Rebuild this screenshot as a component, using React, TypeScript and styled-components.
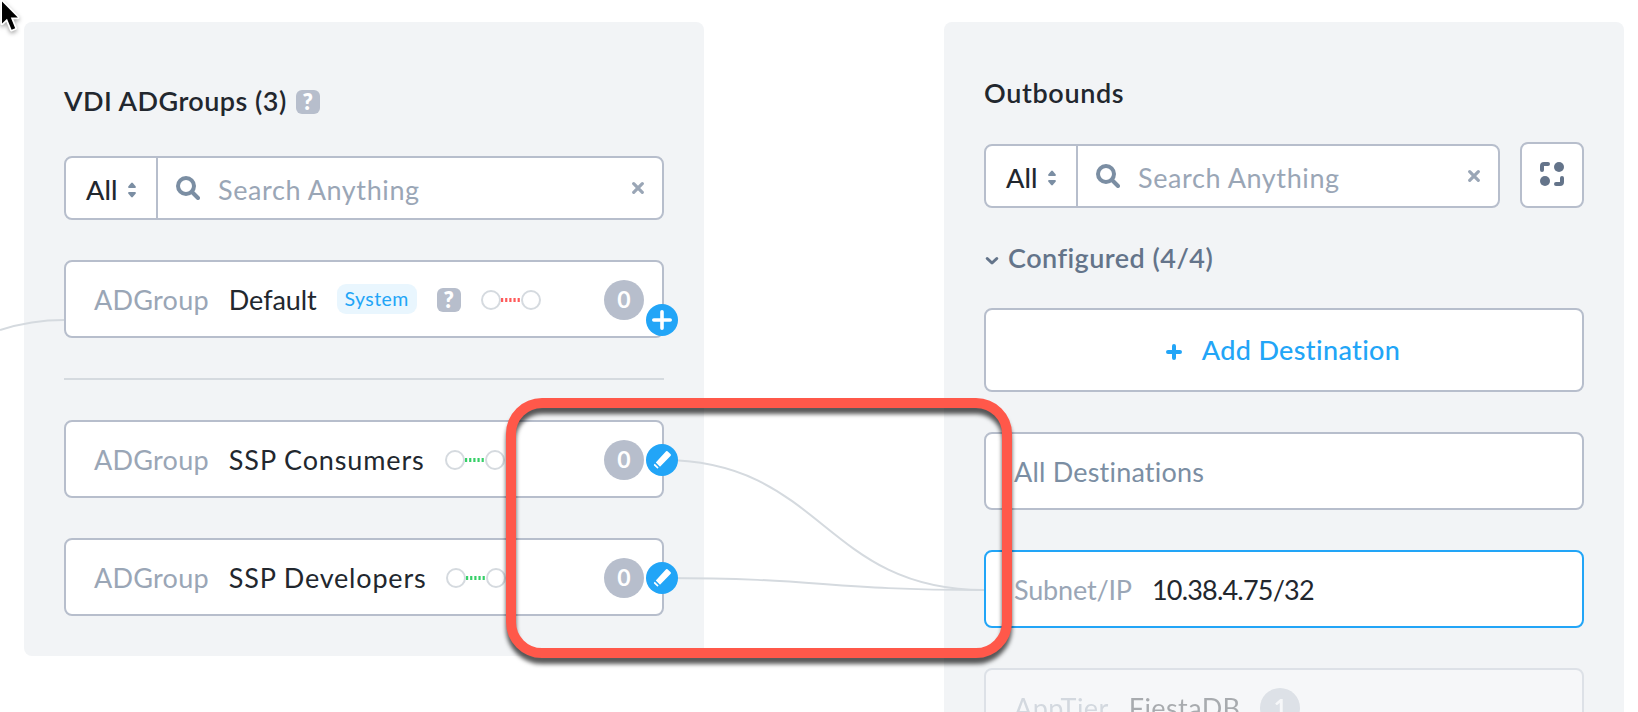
import React from 'react';
import styled, { createGlobalStyle, css } from 'styled-components';

const color = {
  panel: '#f2f4f6',
  border: '#b7becc',
  text: '#22272e',
  muted: '#9aa6b6',
  icon: '#7b8ea3',
  slate: '#64748a',
  blue: '#22a5f7',
  blueSoft: '#e9f6fe',
  wire: '#d5dadf',
  danger: '#ff584a',
};

const GlobalStyle = createGlobalStyle`
  * { box-sizing: border-box; }
  html, body { margin: 0; background: #fff; overflow: hidden; }
  body { font-family: Lato, "Open Sans", sans-serif; font-size: 27px; line-height: 32px; color: ${color.text}; }
`;

const Page = styled.main`
  position: relative;
  display: flex;
  align-items: flex-start;
  gap: 240px;
  height: 712px;
  padding: 22px 14px 0 24px;
  overflow: hidden;
`;

const Panel = styled.section`
  flex: none;
  width: 680px;
  padding: 40px;
  border-radius: 8px;
  background: ${color.panel};
`;

const Txt = styled.span<{ $track?: number }>`
  white-space: nowrap;
  letter-spacing: ${(p) => p.$track ?? 0}px;
`;

const Heading = styled.h2<{ $compact?: boolean }>`
  display: flex;
  align-items: center;
  gap: 9px;
  height: ${(p) => (p.$compact ? 64 : 80)}px;
  margin: 0 0 ${(p) => (p.$compact ? 16 : 14)}px;
  font-size: 27px;
  font-weight: 600;

  > ${Txt} { padding-bottom: 3px; }
`;

const HelpMark = styled.span`
  flex: none;
  width: 24px;
  height: 24px;
  border-radius: 6px;
  background: ${color.border};
  color: #fff;
  font-size: 22px;
  font-weight: 800;
  line-height: 23px;
  text-align: center;
`;

const Toolbar = styled.div`
  display: flex;
  align-items: flex-end;
  gap: 20px;
`;

const frame = css`
  border: 2px solid ${color.border};
  border-radius: 8px;
  background: #fff;
`;

const SearchBox = styled.div`
  ${frame}
  flex: 1;
  display: flex;
  height: 64px;
`;

const Scope = styled.div`
  display: flex;
  align-items: center;
  justify-content: space-between;
  width: 92px;
  padding: 0 20px 0 20px;
  border-right: 2px solid ${color.border};
  font-weight: 500;

  > svg { margin-top: 4px; }
`;

const Query = styled.div`
  flex: 1;
  display: flex;
  align-items: center;
  gap: 18px;
  padding: 0 18px;
  color: ${color.muted};

  > svg:last-child { margin-left: auto; }
`;

const Placeholder = styled(Txt)`
  padding-top: 4px;
`;

const IconButton = styled.button`
  ${frame}
  display: flex;
  justify-content: center;
  align-items: center;
  width: 64px;
  height: 66px;
  padding: 0 0 2px;
`;

const Card = styled.div<{ $active?: boolean; $faded?: boolean }>`
  ${frame}
  position: relative;
  display: flex;
  align-items: center;
  gap: 20px;
  height: 78px;
  margin-top: 40px;
  padding: 2px 18px 0 28px;
  ${(p) => p.$active && `border-color: ${color.blue};`}
  ${(p) => p.$faded && 'opacity: 0.35;'}
`;

const Kind = styled(Txt)`
  color: ${color.muted};
`;

const AllLabel = styled(Txt)`
  color: ${color.icon};
`;

const Tag = styled.span`
  width: 80px;
  height: 30px;
  margin-top: -2px;
  border-radius: 9px;
  background: ${color.blueSoft};
  color: ${color.blue};
  font-size: 19.5px;
  line-height: 30px;
  letter-spacing: 0.4px;
  text-align: center;
`;

const Count = styled.span<{ $end?: boolean }>`
  flex: none;
  width: 40px;
  height: 40px;
  border-radius: 50%;
  background: ${color.border};
  color: #fff;
  font-size: 23px;
  font-weight: 700;
  line-height: 39px;
  text-align: center;
  ${(p) => p.$end && 'margin-left: auto;'}
`;

const Knob = styled.span<{ $corner?: boolean }>`
  position: absolute;
  z-index: 2;
  right: -16px;
  top: ${(p) => (p.$corner ? 42 : 22)}px;
  display: flex;
  width: 32px;
  height: 32px;
  border-radius: 50%;
  background: ${color.blue};
`;

const Divider = styled.hr`
  height: 2px;
  margin: 40px 0 0;
  border: 0;
  background: ${color.wire};
`;

const GroupToggle = styled.div`
  display: flex;
  align-items: center;
  gap: 9px;
  height: 32px;
  margin-top: 34px;
  padding-left: 1px;
  color: ${color.slate};
  font-weight: 600;

  > svg { margin-top: 6px; }
`;

const AddButton = styled.button`
  ${frame}
  display: flex;
  align-items: center;
  justify-content: center;
  gap: 20px;
  width: 100%;
  height: 84px;
  margin-top: 34px;
  padding: 0 2px 0 0;
  color: ${color.blue};
  font: 500 27px/32px Lato, sans-serif;

  > svg { margin-top: 4px; }
`;

const Wires = styled.svg`
  position: absolute;
  z-index: 1;
  inset: 0;
  pointer-events: none;
`;

const Callout = styled.div`
  position: absolute;
  z-index: 3;
  left: 506px;
  top: 398px;
  width: 506px;
  height: 260px;
  border: 10px solid ${color.danger};
  border-radius: 36px;
  filter: drop-shadow(0 6px 2px rgba(0, 0, 0, 0.65));
`;

const Pointer = styled.svg`
  position: absolute;
  z-index: 4;
  left: 0;
  top: 0;
  filter: drop-shadow(0 2px 2px rgba(0, 0, 0, 0.35));
`;

const SortIcon = () => (
  <svg width="8" height="16" viewBox="0 0 8 16" fill={color.icon}>
    <path d="M3.2 1Q4 .1 4.800 1L7.600 4.300Q8.300 6 7 6H1Q-.3 6 .4 4.300Z" />
    <path d="M3.200 15Q4 15.900 4.800 15L7.600 11.700Q8.300 10 7 10H1Q-.3 10 .4 11.700Z" />
  </svg>
);

const SearchIcon = () => (
  <svg width="24" height="24" viewBox="0 0 24 24" fill="none" stroke={color.icon} strokeWidth="4" strokeLinecap="round">
    <circle cx="10" cy="10" r="8" />
    <path d="M16 16L22 22" />
  </svg>
);

const ClearIcon = () => (
  <svg width="12" height="12" viewBox="0 0 12 12" fill="none" stroke={color.muted} strokeWidth="3.2" strokeLinecap="round">
    <path d="M1.700 1.700L10.300 10.300M10.300 1.700L1.700 10.300" />
  </svg>
);

const LayoutIcon = () => (
  <svg width="24" height="24" viewBox="0 0 24 24" fill={color.slate}>
    <circle cx="19" cy="5" r="5" />
    <circle cx="5" cy="19" r="5" />
    <path d="M0 8V4Q0 0 4 0H8A2 2 0 0 1 8 4H4V8A2 2 0 0 1 0 8Z" />
    <path d="M24 16V20Q24 24 20 24H16A2 2 0 0 1 16 20H20V16A2 2 0 0 1 24 16Z" />
  </svg>
);

const ChevronIcon = () => (
  <svg width="14" height="10" viewBox="0 0 14 10" fill="none" stroke={color.slate} strokeWidth="3" strokeLinecap="round" strokeLinejoin="round">
    <path d="M2.200 2.500L7 7L11.800 2.500" />
  </svg>
);

const PlusIcon = () => (
  <svg width="16" height="16" viewBox="0 0 16 16" fill="none" stroke={color.blue} strokeWidth="4" strokeLinecap="round">
    <path d="M8 2V14M2 8H14" />
  </svg>
);

const KnobPlus = () => (
  <svg width="32" height="32" viewBox="0 0 32 32" fill="none" stroke="#fff" strokeWidth="3.6" strokeLinecap="round">
    <path d="M16 7.800V24.200M7.800 16H24.200" />
  </svg>
);

const KnobPencil = () => (
  <svg width="32" height="32" viewBox="0 0 32 32" fill="#fff">
    <path d="M20.100 7.300Q20.800 6.600 21.500 7.300L24.700 10.300Q25.300 11 24.700 11.700L14 22.700L9.800 18.500Z" />
    <path d="M8.800 19.800L12.600 23.600L12 24.300Q11.500 24.800 11 24.300L8 21.400Q7.700 20.900 8 20.500Z" />
  </svg>
);

const LinkIcon = ({ tint }: { tint: string }) => (
  <svg width="60" height="20" viewBox="0 0 60 20" fill="#fff">
    <circle cx="10" cy="10" r="9" stroke={color.wire} strokeWidth="2" />
    <circle cx="50" cy="10" r="9" stroke={color.wire} strokeWidth="2" />
    <path d="M20 10H39" stroke={tint} strokeWidth="4" strokeDasharray="2.200 1.950" />
  </svg>
);

const Search = () => (
  <SearchBox>
    <Scope>
      <Placeholder $track={0.1}>All</Placeholder>
      <SortIcon />
    </Scope>
    <Query>
      <SearchIcon />
      <Placeholder $track={0.6}>Search Anything</Placeholder>
      <ClearIcon />
    </Query>
  </SearchBox>
);

const AdGroup = ({ name, track }: { name: string; track: number }) => (
  <Card>
    <Kind $track={0.25}>ADGroup</Kind>
    <Txt $track={track}>{name}</Txt>
    <LinkIcon tint="#36d068" />
    <Count $end>0</Count>
    <Knob><KnobPencil /></Knob>
  </Card>
);

export default function App() {
  return (
    <Page>
      <GlobalStyle />
      <Panel>
        <Heading>
          <Txt $track={0.46}>VDI ADGroups (3)</Txt>
          <HelpMark>?</HelpMark>
        </Heading>
        <Toolbar><Search /></Toolbar>
        <Card>
          <Kind $track={0.25}>ADGroup</Kind>
          <Txt $track={-0.08}>Default</Txt>
          <Tag>System</Tag>
          <HelpMark>?</HelpMark>
          <LinkIcon tint="#ff5a5a" />
          <Count $end>0</Count>
          <Knob $corner><KnobPlus /></Knob>
        </Card>
        <Divider />
        <AdGroup name="SSP Consumers" track={0.87} />
        <AdGroup name="SSP Developers" track={0.81} />
      </Panel>

      <Panel>
        <Heading $compact>
          <Txt $track={0.64}>Outbounds</Txt>
        </Heading>
        <Toolbar>
          <Search />
          <IconButton aria-label="Layout"><LayoutIcon /></IconButton>
        </Toolbar>
        <GroupToggle>
          <ChevronIcon />
          <Txt $track={0.47}>Configured (4/4)</Txt>
        </GroupToggle>
        <AddButton>
          <PlusIcon />
          <Txt $track={0.36}>Add Destination</Txt>
        </AddButton>
        <Card><AllLabel $track={0.2}>All Destinations</AllLabel></Card>
        <Card $active>
          <Kind $track={-0.17}>Subnet/IP</Kind>
          <Txt $track={-0.8}>10.38.4.75/32</Txt>
        </Card>
        <Card $faded>
          <Kind $track={0.45}>AppTier</Kind>
          <Txt $track={0.4}>FiestaDB</Txt>
          <Count>1</Count>
        </Card>
      </Panel>

      <Wires width="1638" height="712" viewBox="0 0 1638 712" fill="none" stroke={color.wire} strokeWidth="2">
        <path d="M0 330C22 323 42 320 64 320" />
        <path d="M662 460C823 460 823 590 984 590" />
        <path d="M662 578C823 578 823 590 984 590" />
      </Wires>
      <Callout />
      <Pointer width="26" height="36" viewBox="0 0 26 36">
        <path d="M2 1.500V23.500L7 18.700L11.600 29.700L15.200 28.200L10.800 17.600H17.800Z" fill="#000" stroke="#fff" strokeWidth="3.500" strokeLinejoin="round" paintOrder="stroke" />
      </Pointer>
    </Page>
  );
}
